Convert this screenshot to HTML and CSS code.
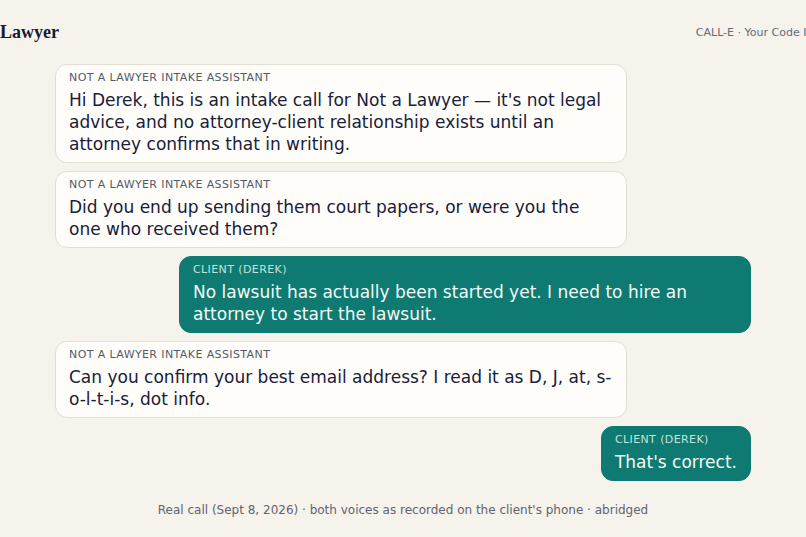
FILE: index.html
```html
<!DOCTYPE html>
<html lang="en">

<head>
    <meta charset="UTF-8">
    <meta name="viewport" content="width=device-width, initial-scale=1.0">
    <title>Not a Lawyer · Intake call</title>
    <link rel="stylesheet" href="styles.css">
</head>

<body>
    <div class="topbar">
        <div class="brand">Not a Lawyer</div>
        <div class="tagline">CALL-E · Your Code Is Safe</div>
    </div>

    <div class="transcript">
        <div class="bubble assistant">
            <p class="speaker">Not a Lawyer intake assistant</p>
            <p class="line">Hi Derek, this is an intake call for Not a Lawyer — it's not legal advice, and no attorney-client relationship exists until an attorney confirms that in writing.</p>
        </div>
        <div class="bubble assistant">
            <p class="speaker">Not a Lawyer intake assistant</p>
            <p class="line">Did you end up sending them court papers, or were you the one who received them?</p>
        </div>
        <div class="bubble client">
            <p class="speaker">Client (Derek)</p>
            <p class="line">No lawsuit has actually been started yet. I need to hire an attorney to start the lawsuit.</p>
        </div>
        <div class="bubble assistant">
            <p class="speaker">Not a Lawyer intake assistant</p>
            <p class="line">Can you confirm your best email address? I read it as D, J, at, s-o-l-t-i-s, dot info.</p>
        </div>
        <div class="bubble client">
            <p class="speaker">Client (Derek)</p>
            <p class="line">That's correct.</p>
        </div>
    </div>

    <p class="caption">Real call (Sept 8, 2026) · both voices as recorded on the client's phone · abridged</p>
</body>

</html>
```

FILE: styles.css
```css
body {
    margin: 0;
    font-family: "DejaVu Sans", Verdana, sans-serif;
    background-color: #f6f2ec;
    color: #18203a;
    overflow: hidden;
}

.topbar {
    display: flex;
    justify-content: space-between;
    align-items: center;
    height: 64px;
    margin: 0 -34px 0 -46px;
}

.brand {
    font-family: "Liberation Serif", "Times New Roman", serif;
    font-weight: bold;
    font-size: 18px;
    color: #141c33;
}

.tagline {
    font-size: 11px;
    color: #666b78;
}

.transcript {
    width: 696px;
    margin: 0 auto;
    display: flex;
    flex-direction: column;
    gap: 8px;
}

.bubble {
    max-width: 544px;
    padding: 6px 13px 7px;
    border-radius: 12px;
    border: 1px solid #e3ddd3;
}

.bubble p {
    margin: 0;
}

.assistant {
    align-self: flex-start;
    background-color: #fffdf9;
}

.client {
    align-self: flex-end;
    background-color: #0e7a71;
    border-color: #0e7a71;
}

.speaker {
    font-size: 11px;
    line-height: 14px;
    letter-spacing: 0.4px;
    text-transform: uppercase;
    color: #535a6c;
    margin-bottom: 4px !important;
}

.client .speaker {
    color: #c4e2dc;
}

.line {
    font-size: 17px;
    line-height: 22px;
}

.client .line {
    color: #f3faf8;
}

.caption {
    margin: 22px 0 0;
    text-align: center;
    font-size: 12px;
    line-height: 14px;
    color: #5f6472;
}
```
